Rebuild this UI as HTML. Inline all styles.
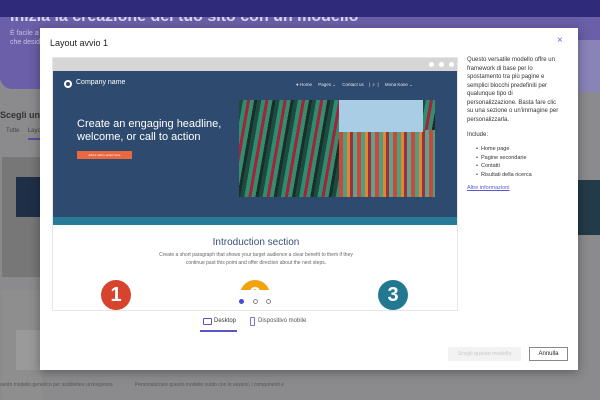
<!DOCTYPE html>
<html><head><style>
*{margin:0;padding:0;box-sizing:border-box}
body{width:600px;height:400px;overflow:hidden;font-family:"Liberation Sans",sans-serif;background:#8b8b8d;position:relative}
.abs{position:absolute}
</style></head><body>
<div class="abs" style="left:0;top:17px;width:600px;height:72px;background:#6a5fa8;border-radius:0 0 0 12px"></div>
<div class="abs" style="left:10px;top:8px;color:#d8d4ee;font-size:16px;font-weight:bold;white-space:nowrap">Inizia la creazione del tuo sito con un modello</div>
<div class="abs" style="left:0;top:0;width:600px;height:17px;background:#2f2a79"></div>
<div class="abs" style="left:10px;top:29px;color:#c8c2e4;font-size:7px;line-height:9px">È facile a<br>che desid</div>
<div class="abs" style="left:0;top:110px;color:#333;font-size:9px;font-weight:bold">Scegli un</div>
<div class="abs" style="left:6px;top:128px;color:#444;font-size:6px">Tutte &nbsp;&nbsp;&nbsp; Layo</div>
<div class="abs" style="left:28px;top:138px;width:14px;height:2px;background:#5a4ea0"></div>
<div class="abs" style="left:2px;top:157px;width:40px;height:120px;background:#777"></div>
<div class="abs" style="left:16px;top:177px;width:26px;height:40px;background:#1f2f48"></div>
<div class="abs" style="left:2px;top:290px;width:40px;height:110px;background:#8e8e8e"></div>
<div class="abs" style="left:16px;top:330px;width:26px;height:40px;background:#9a9a9a"></div>
<div class="abs" style="left:578px;top:40px;width:22px;height:52px;background:#8a83b8"></div>
<div class="abs" style="left:578px;top:180px;width:22px;height:55px;background:#233a48"></div>
<!-- modal -->
<div class="abs" style="left:40px;top:28px;width:538px;height:342px;background:#fff;box-shadow:0 2px 10px rgba(0,0,0,.35)"></div>
<div class="abs" style="left:50px;top:38px;font-size:9px;color:#222">Layout avvio 1</div>
<div class="abs" style="left:557px;top:35px;font-size:10px;color:#6b6bd0">×</div>
<!-- preview -->
<div class="abs" style="left:52px;top:57px;width:406px;height:254px;background:#fff;border:1px solid #e6e6e6;overflow:hidden">
 <div class="abs" style="left:0;top:0;width:406px;height:13px;background:#d6d6d6"></div>
 <div class="abs" style="left:376px;top:4px;width:5px;height:5px;border-radius:50%;background:#fff"></div>
 <div class="abs" style="left:386px;top:4px;width:5px;height:5px;border-radius:50%;background:#fff"></div>
 <div class="abs" style="left:396px;top:4px;width:5px;height:5px;border-radius:50%;background:#fff"></div>
 <div class="abs" style="left:0;top:13px;width:406px;height:146px;background:#2e4a6f"></div>
 <div class="abs" style="left:0;top:159px;width:406px;height:8px;background:#277b96"></div>
 <div class="abs" style="left:11px;top:22px;width:8px;height:8px;border-radius:50%;border:2px solid #fff"></div>
 <div class="abs" style="left:23px;top:21px;color:#fff;font-size:7px">Company name</div>
 <div class="abs" style="left:243px;top:24px;color:#dfe6f0;font-size:4.5px;white-space:nowrap">● Home &nbsp;&nbsp;&nbsp; Pages ⌄ &nbsp;&nbsp;&nbsp; Contact us &nbsp;&nbsp; | &nbsp;⌕ &nbsp;| &nbsp;&nbsp;&nbsp; Mona Kane ⌄</div>
 <div class="abs" style="left:24px;top:60px;color:#fff;font-size:11px;line-height:12.5px">Create an engaging headline,<br>welcome, or call to action</div>
 <div class="abs" style="left:24px;top:93px;width:55px;height:8px;background:#e8683f;color:#fff;font-size:3px;line-height:8px;text-align:center">Add a call to action here</div>
 <div class="abs" style="left:186px;top:42px;width:196px;height:97px;background:repeating-linear-gradient(100deg,#1e4a3f 0 4px,#2c8d70 4px 8px,#a2233a 8px 11px,#3a8a6f 11px 15px,#163028 15px 18px);"></div>
 <div class="abs" style="left:286px;top:72px;width:96px;height:67px;background:repeating-linear-gradient(90deg,#c84a3c 0 4px,#4e9e82 4px 8px,#e3862e 8px 11px,#9a3040 11px 14px,#5fa38e 14px 18px)"></div>
 <div class="abs" style="left:286px;top:42px;width:84px;height:32px;background:#a9cde4"></div>
 <div class="abs" style="left:0;top:179px;width:406px;text-align:center;color:#3a4f78;font-size:10px">Introduction section</div>
 <div class="abs" style="left:0;top:193px;width:406px;text-align:center;color:#666;font-size:5px;line-height:8px">Create a short paragraph that shows your target audience a clear benefit to them if they<br>continue past this point and offer direction about the next steps.</div>
 <div class="abs" style="left:48px;top:222px;width:30px;height:30px;border-radius:50%;background:#d8432e;color:#fff;font-weight:bold;font-size:20px;text-align:center;line-height:30px">1</div>
 <div class="abs" style="left:187px;top:222px;width:30px;height:30px;border-radius:50%;background:#f2a20f;color:#fff;font-weight:bold;font-size:20px;text-align:center;line-height:30px">2</div>
 <div class="abs" style="left:325px;top:222px;width:30px;height:30px;border-radius:50%;background:#237891;color:#fff;font-weight:bold;font-size:20px;text-align:center;line-height:30px">3</div>
 <div class="abs" style="left:170px;top:232px;width:66px;height:22px;background:#fff"></div>
 <div class="abs" style="left:186px;top:241px;width:5px;height:5px;border-radius:50%;background:#4a4ad0"></div>
 <div class="abs" style="left:200px;top:241px;width:5px;height:5px;border-radius:50%;border:1px solid #888"></div>
 <div class="abs" style="left:213px;top:241px;width:5px;height:5px;border-radius:50%;border:1px solid #888"></div>
</div>
<div class="abs" style="left:467px;top:56px;width:96px;color:#333;font-size:6px;line-height:8.5px">Questo versatile modello offre un framework di base per lo spostamento tra più pagine e semplici blocchi predefiniti per qualunque tipo di personalizzazione. Basta fare clic su una sezione o un'immagine per personalizzarla.</div>
<div class="abs" style="left:467px;top:132px;color:#333;font-size:6px">Include:</div>
<div class="abs" style="left:476px;top:145px;color:#333;font-size:5.5px;line-height:8.5px">• &nbsp;Home page<br>• &nbsp;Pagine secondarie<br>• &nbsp;Contatti<br>• &nbsp;Risultati della ricerca</div>
<div class="abs" style="left:467px;top:185px;color:#5a5ad0;font-size:5.5px;text-decoration:underline">Altre informazioni</div>
<!-- tabs -->
<div class="abs" style="left:203px;top:318px;width:9px;height:7px;border:1px solid #5a55c8;border-radius:1px"></div>
<div class="abs" style="left:214px;top:318px;color:#333;font-size:6px">Desktop</div>
<div class="abs" style="left:200px;top:330px;width:37px;height:1.5px;background:#5a55c8"></div>
<div class="abs" style="left:250px;top:317px;width:5px;height:9px;border:1px solid #7a75d0;border-radius:1px"></div>
<div class="abs" style="left:258px;top:318px;color:#555;font-size:6px">Dispositivo mobile</div>
<!-- buttons -->
<div class="abs" style="left:448px;top:347px;width:73px;height:14px;background:#f2f2f2;color:#c8c8c8;font-size:5.5px;text-align:center;line-height:14px">Scegli questo modello</div>
<div class="abs" style="left:529px;top:347px;width:39px;height:14px;border:1px solid #888;color:#222;font-size:6px;text-align:center;line-height:12px">Annulla</div>
<div class="abs" style="left:0;top:382px;color:#555;font-size:5px;white-space:nowrap">uesto modello generico per soddisfare un'esigenza &nbsp;&nbsp;&nbsp;&nbsp;&nbsp;&nbsp;&nbsp;&nbsp;&nbsp;&nbsp;&nbsp;&nbsp;&nbsp;&nbsp; Personalizzare questo modello vuoto con le sezioni, i componenti e</div>
</body></html>
